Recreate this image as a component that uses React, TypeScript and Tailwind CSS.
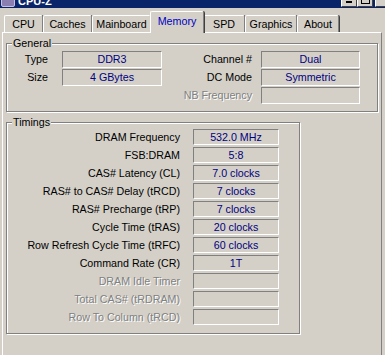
import React from "react";

const tabs = ["CPU", "Caches", "Mainboard", "Memory", "SPD", "Graphics", "About"];
const tabWidths: Record<string, string> = {
  CPU: "w-[39px]",
  Caches: "w-[49px]",
  Mainboard: "w-[59px]",
  Memory: "w-[54px]",
  SPD: "w-[42px]",
  Graphics: "w-[52px]",
  About: "w-[42px]",
};

const timings = [
  { label: "DRAM Frequency", value: "532.0 MHz" },
  { label: "FSB:DRAM", value: "5:8" },
  { label: "CAS# Latency (CL)", value: "7.0 clocks" },
  { label: "RAS# to CAS# Delay (tRCD)", value: "7 clocks" },
  { label: "RAS# Precharge (tRP)", value: "7 clocks" },
  { label: "Cycle Time (tRAS)", value: "20 clocks" },
  { label: "Row Refresh Cycle Time (tRFC)", value: "60 clocks" },
  { label: "Command Rate (CR)", value: "1T" },
  { label: "DRAM Idle Timer", value: "", disabled: true },
  { label: "Total CAS# (tRDRAM)", value: "", disabled: true },
  { label: "Row To Column (tRCD)", value: "", disabled: true },
];

function Field({ value, className }: { value: string; className: string }) {
  return (
    <div
      className={`flex items-center justify-center border border-t-[#808080] border-l-[#808080] border-b-white border-r-white text-[#000080] leading-none ${className}`}
    >
      {value}
    </div>
  );
}

function Label({ text, disabled, className }: { text: string; disabled?: boolean; className: string }) {
  return (
    <div
      className={`flex items-center justify-end whitespace-nowrap leading-none ${
        disabled ? "text-[#808080] [text-shadow:1px_1px_0_#fff]" : "text-black"
      } ${className}`}
    >
      {text}
    </div>
  );
}

function Group({ title, className, children }: { title: string; className: string; children: React.ReactNode }) {
  return (
    <div className={`relative border border-[#808080] shadow-[inset_1px_1px_0_#fff,1px_1px_0_#fff] ${className}`}>
      <span className="absolute -top-[7px] left-[5px] bg-[#d4d0c8] px-[1px] leading-[13px] text-black">{title}</span>
      {children}
    </div>
  );
}

export default function App() {
  return (
    <div
      className="w-[385px] h-[355px] overflow-hidden bg-[#d4d0c8] text-[10.7px]"
      style={{ fontFamily: '"Liberation Sans", Arial, sans-serif' }}
    >
      {/* Title bar, top part cut off */}
      <div className="h-[8px] overflow-hidden bg-[#0a246a]">
        <div className="-mt-[10px] flex h-[18px] items-center">
          <div className="ml-[1px] h-[14px] w-[14px] mt-[2px] rounded-[2px] bg-[#8a7fb0] border border-[#c8c0e0]" />
          <span className="ml-[3px] mt-[4px] text-[11px] font-bold text-white">CPU-Z</span>
          <div className="ml-auto flex items-center mt-[2px]">
            <div className="flex h-[14px] w-[16px] items-end justify-center bg-[#d4d0c8] border border-t-white border-l-white border-b-[#404040] border-r-[#404040] pb-[3px]">
              <div className="h-[2px] w-[6px] bg-black" />
            </div>
            <div className="flex h-[14px] w-[16px] items-end justify-center bg-[#d4d0c8] border border-t-white border-l-white border-b-[#404040] border-r-[#404040] pb-[2px]">
              <div className="h-[8px] w-[9px] border border-black" />
            </div>
            <div className="ml-[2px] -mr-[6px] h-[14px] w-[16px] bg-[#d4d0c8] border border-t-white border-l-white border-b-[#404040] border-r-[#404040]" />
          </div>
        </div>
      </div>

      {/* Tabs */}
      <div className="flex h-[24px] items-end pl-[4px]">
        {tabs.map((t) => {
          const selected = t === "Memory";
          return (
            <div
              key={t}
              className={`flex items-center justify-center rounded-t-[2px] border-t border-l border-r border-t-white border-l-white border-r-[#808080] shadow-[1px_0_0_#404040] bg-[#d4d0c8] ${
                tabWidths[t]
              } ${
                selected
                  ? "relative z-10 -mx-[1px] -mb-[1px] h-[22px] pb-[3px] text-[#0000c0]"
                  : "h-[17px] text-black"
              }`}
            >
              {t}
            </div>
          );
        })}
      </div>

      {/* Panel */}
      <div className="ml-[2px] h-[400px] w-[380px] border-t border-l border-r border-t-white border-l-white border-r-[#808080] pl-[3px]">
        <Group title="General" className="mt-[10px] h-[69px] w-[372px]">
          <div className="flex pl-[0px] pt-[7px]">
            <div className="flex flex-col gap-[1px]">
              {[
                ["Type", "DDR3"],
                ["Size", "4 GBytes"],
              ].map(([l, v]) => (
                <div key={l} className="flex">
                  <Label text={l} className="w-[41px]" />
                  <Field value={v} className="ml-[14px] h-[17px] w-[100px]" />
                </div>
              ))}
            </div>
            <div className="flex flex-col gap-[1px]">
              {[
                ["Channel #", "Dual", false],
                ["DC Mode", "Symmetric", false],
                ["NB Frequency", "", true],
              ].map(([l, v, d]) => (
                <div key={l as string} className="flex">
                  <Label text={l as string} disabled={d as boolean} className="w-[90px]" />
                  <Field value={v as string} className="ml-[9px] h-[17px] w-[99px]" />
                </div>
              ))}
            </div>
          </div>
        </Group>

        <Group title="Timings" className="mt-[10px] h-[212px] w-[294px]">
          <div className="flex flex-col gap-[2px] pt-[6px]">
            {timings.map((r) => (
              <div key={r.label} className="flex">
                <Label text={r.label} disabled={r.disabled} className="w-[173px]" />
                <Field value={r.value} className="ml-[13px] h-[16px] w-[86px]" />
              </div>
            ))}
          </div>
        </Group>
      </div>
    </div>
  );
}
